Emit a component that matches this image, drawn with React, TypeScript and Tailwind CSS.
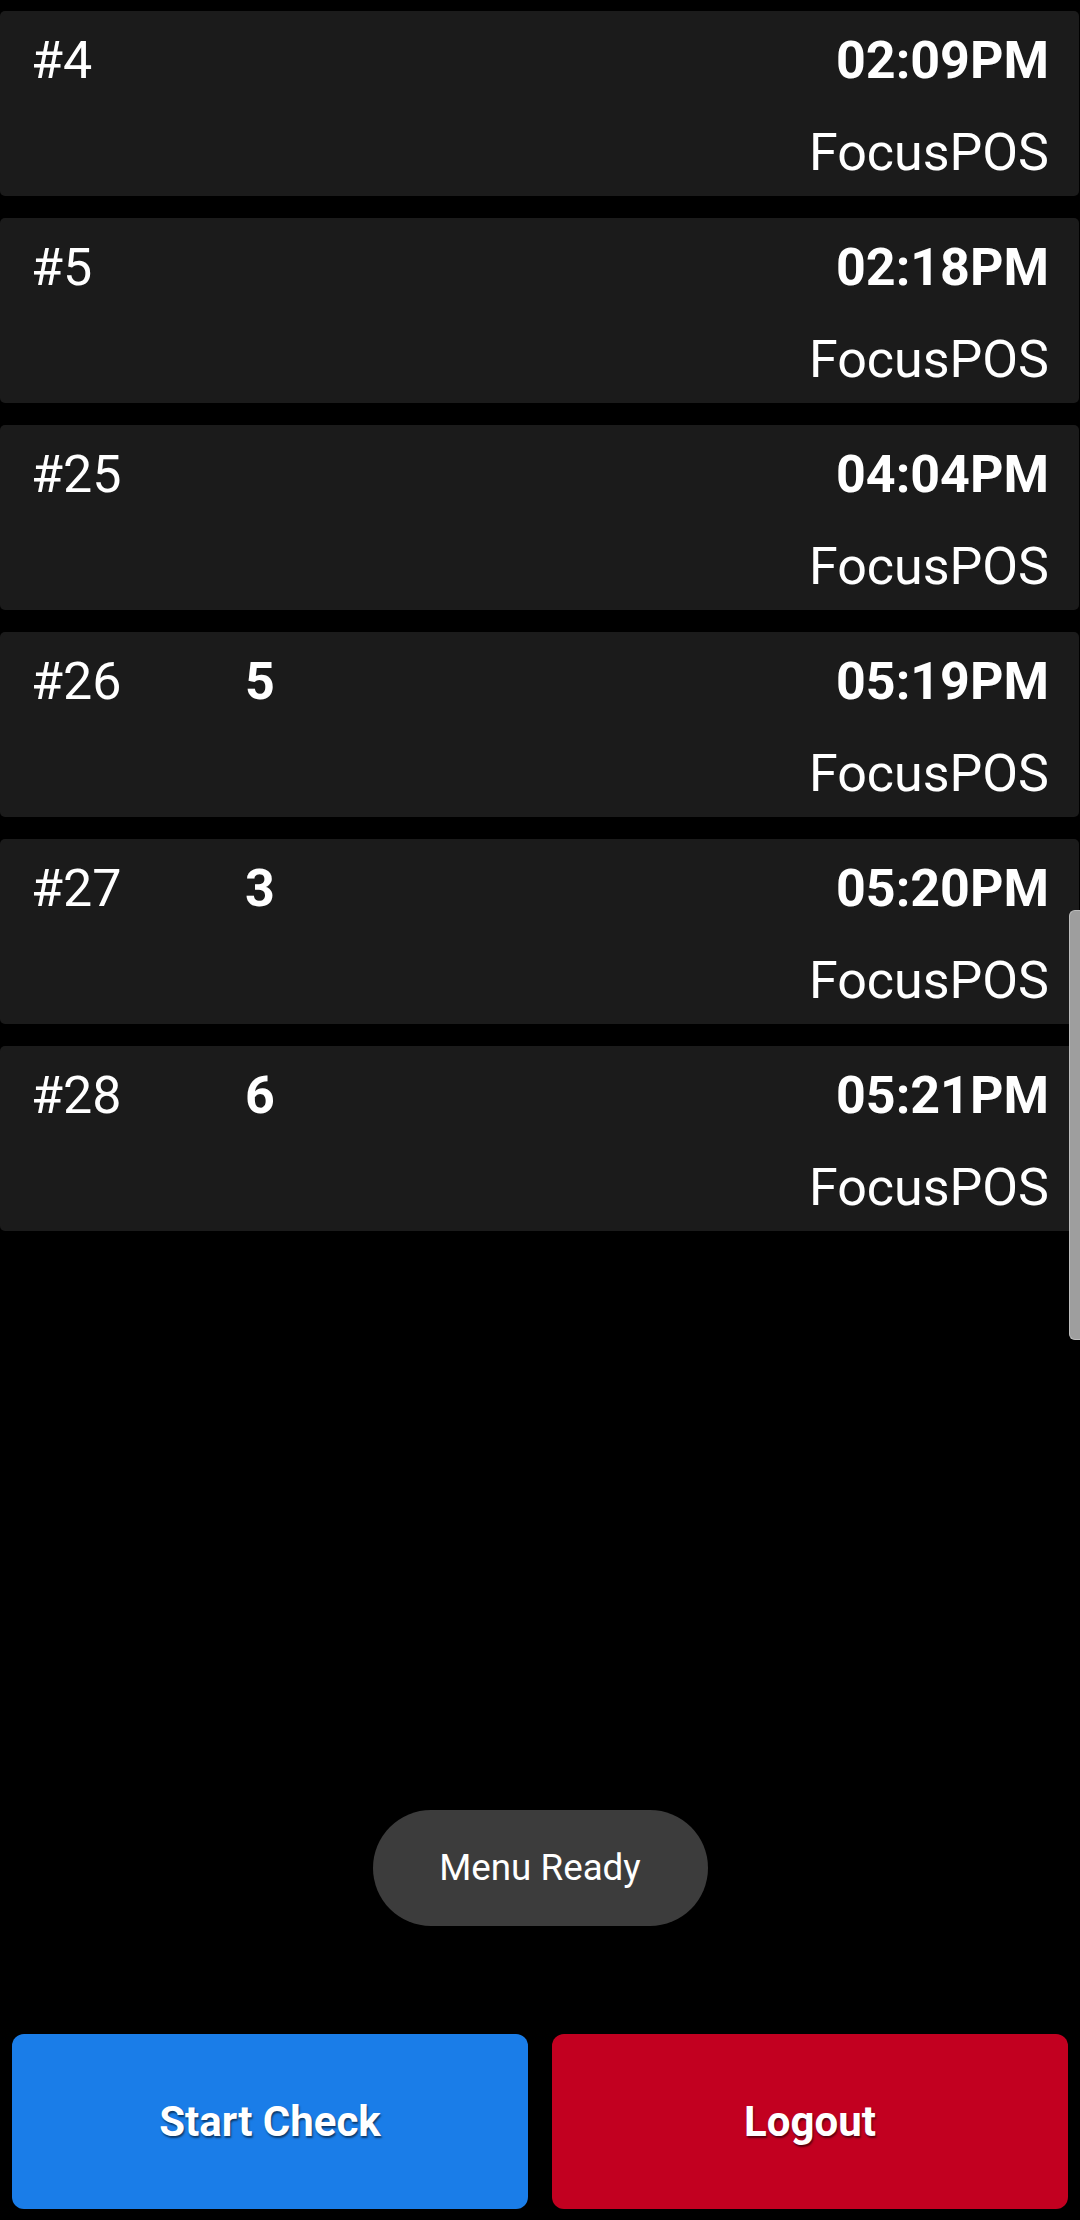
const checks = [
  { id: "#4", guests: "", time: "02:09PM" },
  { id: "#5", guests: "", time: "02:18PM" },
  { id: "#25", guests: "", time: "04:04PM" },
  { id: "#26", guests: "5", time: "05:19PM" },
  { id: "#27", guests: "3", time: "05:20PM" },
  { id: "#28", guests: "6", time: "05:21PM" },
]

const CheckRow = ({ id, guests, time }: { id: string; guests: string; time: string }) => {
  return (
    <div className="h-[185px] bg-[#1b1b1b] rounded-[5px] pl-[31px] pr-[30px] pt-[19px] text-white text-[52px] leading-[61px]">
      <div className="flex">
        <span className="w-[214px]">{id}</span>
        <span className="font-bold">{guests}</span>
        <span className="ml-auto font-bold">{time}</span>
      </div>
      <div className="mt-[31px] text-right">FocusPOS</div>
    </div>
  )
}

export default function App() {
  return (
    <div
      className="relative h-[2220px] w-[1080px] bg-black flex flex-col overflow-hidden"
      style={{ fontFamily: "Roboto, 'Noto Sans', sans-serif" }}
    >
      {/* Open checks */}
      <div className="flex flex-col gap-[22px] pt-[11px] pr-[1px]">
        {checks.map((c) => (
          <CheckRow key={c.id} {...c} />
        ))}
      </div>

      {/* Scroll indicator */}
      <div className="absolute right-0 top-[910px] w-[11px] h-[430px] rounded-l-[6px] bg-[#9e9e9e] border border-r-0 border-[#bdbdbd]" />

      <div className="flex-1" />

      {/* Toast */}
      <div className="mx-auto mb-[108px] w-[335px] h-[116px] rounded-full bg-[#3c3c3c] flex items-center justify-center text-white text-[36.75px]">
        Menu Ready
      </div>

      {/* Actions */}
      <div className="flex gap-[24px] px-[12px] pb-[11px]">
        <button className="flex-1 h-[175px] rounded-[12px] bg-[#1a7de8] text-white font-bold text-[42px] [text-shadow:1px_2px_2px_rgba(0,0,0,0.55)]">
          Start Check
        </button>
        <button className="flex-1 h-[175px] rounded-[12px] bg-[#c20020] text-white font-bold text-[42px] [text-shadow:1px_2px_2px_rgba(0,0,0,0.55)]">
          Logout
        </button>
      </div>
    </div>
  )
}
